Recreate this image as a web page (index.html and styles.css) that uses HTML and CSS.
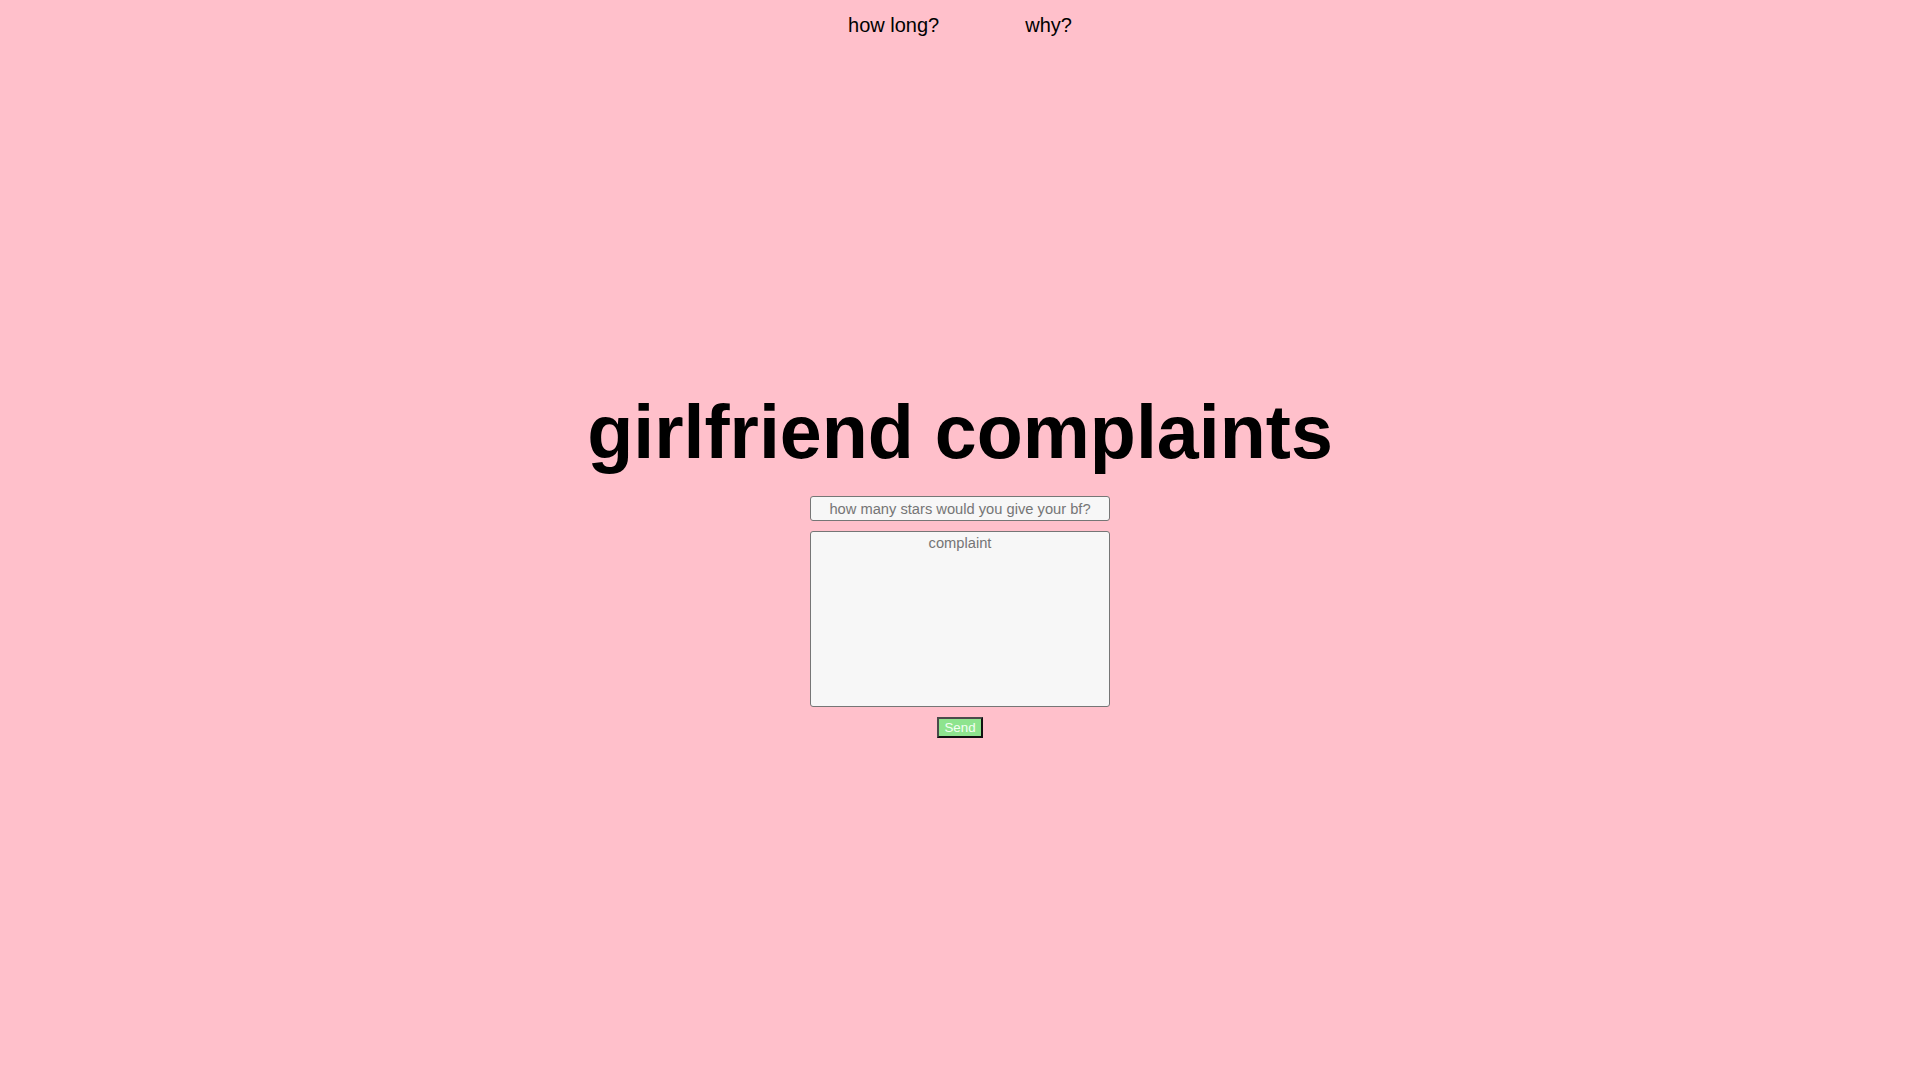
FILE: index.html
```html
<!DOCTYPE html>
<html lang="en">
<head>
<meta charset="utf-8">
<title>girlfriend complaints</title>
<link rel="stylesheet" href="styles.css">
</head>
<body>
<nav class="top-nav">
  <a class="nav-link" href="#">how long?</a>
  <a class="nav-link" href="#">why?</a>
</nav>
<main class="main">
  <h1 class="title">girlfriend complaints</h1>
  <form class="complaint-form">
    <input class="stars-input" type="text" placeholder="how many stars would you give your bf?">
    <textarea class="complaint-input" placeholder="complaint"></textarea>
    <button class="send-btn" type="button">Send</button>
  </form>
</main>
</body>
</html>
```
FILE: styles.css
```css
html, body {
  margin: 0;
  padding: 0;
}
body {
  background: #ffc0cb;
  font-family: "Liberation Sans", Arial, sans-serif;
  color: #000;
  min-height: 100vh;
}
.top-nav {
  display: flex;
  justify-content: center;
  gap: 86px;
  padding-top: 14px;
}
.nav-link {
  font-size: 20px;
  line-height: 22px;
  color: #000;
  text-decoration: none;
}
.main {
  display: flex;
  flex-direction: column;
  align-items: center;
  padding-top: 353px;
}
.title {
  margin: 0 0 21px 0;
  font-size: 75.4px;
  line-height: 86px;
  font-weight: bold;
  text-align: center;
}
.complaint-form {
  display: flex;
  flex-direction: column;
  align-items: center;
  gap: 10px;
}
.stars-input,
.complaint-input {
  box-sizing: border-box;
  width: 300px;
  border: 1px solid #767676;
  border-radius: 3px;
  background: #f7f7f7;
  font-family: "Liberation Sans", Arial, sans-serif;
  font-size: 14.7px;
  text-align: center;
  color: #333;
  outline: none;
  margin: 0;
}
.stars-input {
  height: 25px;
  padding: 1px 2px;
}
.complaint-input {
  height: 176px;
  padding: 3px 2px 2px;
  resize: none;
}
.stars-input::placeholder,
.complaint-input::placeholder {
  color: #757575;
  opacity: 1;
}
.send-btn {
  box-sizing: border-box;
  width: 46px;
  height: 21px;
  padding: 0;
  margin: 0;
  background: #8ee48e;
  color: #f4fff4;
  font-family: "Liberation Sans", Arial, sans-serif;
  font-size: 13.33px;
  border-style: solid;
  border-width: 2px;
  border-color: #4a4a4a #111 #111 #4a4a4a;
}
```
